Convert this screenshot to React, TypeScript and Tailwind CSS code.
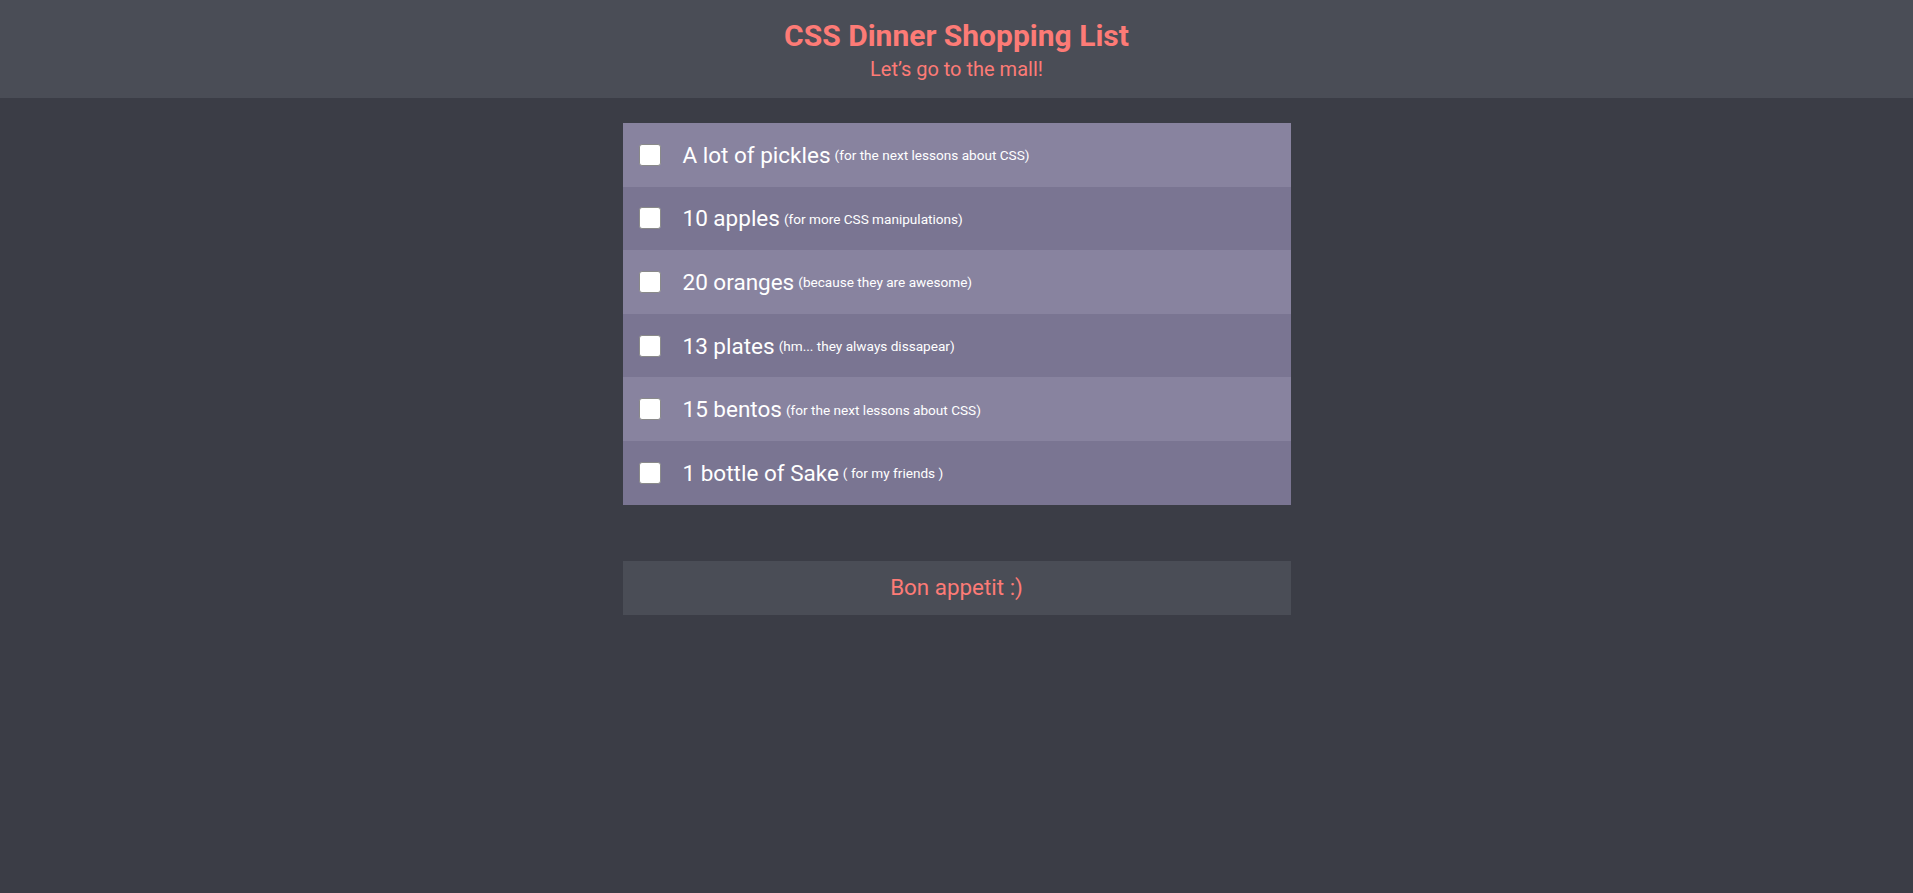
import { useState } from "react";

const items = [
  { name: "A lot of pickles", note: "(for the next lessons about CSS)" },
  { name: "10 apples", note: "(for more CSS manipulations)" },
  { name: "20 oranges", note: "(because they are awesome)" },
  { name: "13 plates", note: "(hm... they always dissapear)" },
  { name: "15 bentos", note: "(for the next lessons about CSS)" },
  { name: "1 bottle of Sake", note: "( for my friends )" },
];

const App = () => {
  const [checked, setChecked] = useState<boolean[]>(items.map(() => false));

  const toggle = (i: number) => {
    setChecked((prev) => prev.map((c, j) => (j === i ? !c : c)));
  };

  return (
    <div className="min-h-screen bg-[#3b3d46] font-['Roboto',sans-serif]">
      <header className="h-[98px] bg-[#4a4d56] flex flex-col items-center pt-[17px]">
        <h1 className="text-[30px] leading-[38px] font-bold text-[#fd7b76]">CSS Dinner Shopping List</h1>
        <p className="mt-[2px] text-[20px] leading-[24px] text-[#fd7b76]">Let’s go to the mall!</p>
      </header>

      <main className="w-[668px] mx-auto pt-[25px]">
        <ul>
          {items.map((item, i) => (
            <li
              key={item.name}
              className={
                "h-[63.6px] flex items-center px-4 text-white " +
                (i % 2 === 0 ? "bg-[#88839f]" : "bg-[#7a7592]")
              }
            >
              <input
                type="checkbox"
                checked={checked[i]}
                onChange={() => toggle(i)}
                className="appearance-none w-[22px] h-[22px] bg-white border border-[#8a8a8a] rounded-[3px] checked:bg-[#fd7b76] shrink-0"
              />
              <span className="ml-[22px] text-[22.5px] leading-[30px]">{item.name}</span>
              <span className="ml-[4px] text-[13.6px] leading-[30px] pt-[1px]">{item.note}</span>
            </li>
          ))}
        </ul>

        <div className="mt-[56px] h-[54px] bg-[#4a4d56] flex items-center justify-center">
          <p className="text-[22.4px] text-[#fd7b76]">Bon appetit :)</p>
        </div>
      </main>
    </div>
  );
};

export default App;
